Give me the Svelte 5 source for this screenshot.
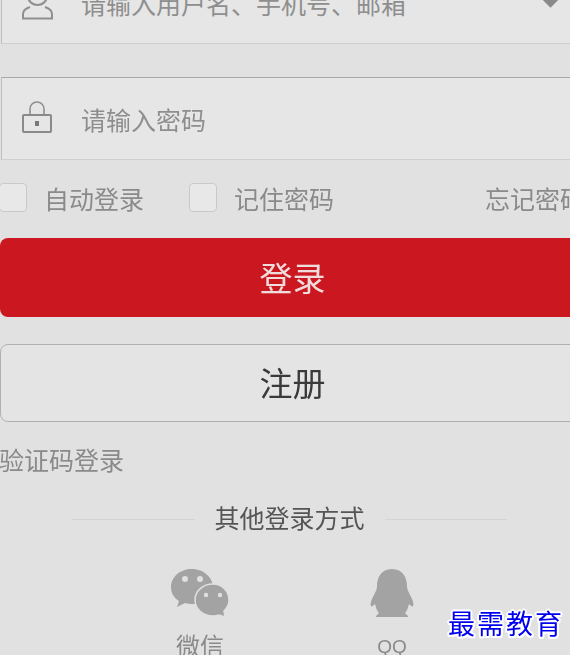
<script lang="ts">
  const options = [
    { label: '自动登录', width: 190 },
    { label: '记住密码', width: 0 }
  ];
</script>

<div class="page">
  <div class="form">
    <div class="field first">
      <svg class="icon user" viewBox="0 0 31 40" width="31" height="40">
        <circle cx="15.5" cy="14" r="10" fill="none" stroke="#8f8f8f" stroke-width="2" />
        <path d="M8 26c-3 1-7 3-7 7v4.5h29V33c0-4-4-6-7-7" fill="none" stroke="#8f8f8f" stroke-width="2" />
      </svg>
      <span class="placeholder">请输入用户名、手机号、邮箱</span>
      <span class="caret"></span>
    </div>

    <div class="field second">
      <svg class="icon lock" viewBox="0 0 30 32" width="30" height="32">
        <path d="M8 14V8a7 7 0 0 1 14 0v6" fill="none" stroke="#8f8f8f" stroke-width="1.6" />
        <rect x="1" y="14" width="28" height="17" rx="1" fill="none" stroke="#8a8a8a" stroke-width="2" />
        <rect x="13" y="20" width="4" height="5" fill="#777" />
      </svg>
      <span class="placeholder">请输入密码</span>
    </div>

    <div class="options">
      {#each options as opt}
        <label class="check" style:width={opt.width ? opt.width + 'px' : 'auto'}>
          <span class="box"></span>
          <span>{opt.label}</span>
        </label>
      {/each}
      <span class="forgot">忘记密码</span>
    </div>

    <button class="btn primary">登录</button>
    <button class="btn secondary">注册</button>

    <div class="sms">验证码登录</div>

    <div class="divider">
      <span class="line"></span>
      <span class="divider-text">其他登录方式</span>
      <span class="line"></span>
    </div>

    <div class="social">
      <div class="social-item">
        <svg viewBox="0 0 60 48" width="60" height="48">
          <path d="M22 0C10 0 1 8 1 18c0 6 3 11 8 14l-2 6 8-4c2 .6 5 1 8 1 10 0 20-8 20-17S34 0 22 0z" fill="#a3a3a3" />
          <circle cx="15" cy="10" r="3" fill="#e0e0e0" />
          <circle cx="30" cy="10" r="3" fill="#e0e0e0" />
          <path d="M43 15c-10 0-18 7-18 16s8 16 18 16c2 0 4-.3 6-1l6 2-1-6c3-3 5-7 5-11 0-9-7-16-16-16z" fill="#a3a3a3" stroke="#e0e0e0" stroke-width="1.5" />
          <circle cx="36" cy="26" r="2.2" fill="#e0e0e0" />
          <circle cx="50" cy="26" r="2.2" fill="#e0e0e0" />
        </svg>
        <span>微信</span>
      </div>
      <div class="social-item">
        <svg viewBox="0 0 44 48" width="44" height="48">
          <path d="M22 0C11 0 7 9 7 17c0 3-1 5-3 9-3 5-4 9-3 11 1 1 2 0 4-2 1 4 2 7 4 9l-3 3v1h32v-1l-3-3c2-2 3-5 4-9 2 2 3 3 4 2 1-2 0-6-3-11-2-4-3-6-3-9 0-8-4-17-15-17z" fill="#a3a3a3" />
        </svg>
        <span class="qq">QQ</span>
      </div>
    </div>
  </div>

  <div class="watermark">最需教育</div>
</div>

<style>
  :global(body) {
    margin: 0;
    background: #e1e1e1;
  }
  .page {
    position: relative;
    width: 570px;
    height: 655px;
    overflow: hidden;
    background: #e1e1e1;
    font-family: "Liberation Sans", "Noto Sans CJK SC", sans-serif;
  }
  .form {
    width: 585px;
    margin-top: -39px;
    filter: blur(0.7px);
  }
  .field {
    display: flex;
    align-items: center;
    box-sizing: border-box;
    height: 83px;
    margin-left: 1px;
    padding-left: 20px;
    background: #e6e6e6;
    border: 1px solid #bdbdbd;
    border-top-color: #a8a8a8;
    border-bottom-color: #cfcfcf;
    border-right: none;
  }
  .field.second {
    margin-top: 33px;
  }
  .icon {
    flex: none;
  }
  .icon.user {
    margin-top: -3px;
    margin-right: -1px;
  }
  .icon.lock {
    margin-top: -4px;
  }
  .placeholder {
    margin-left: 29px;
    font-size: 25px;
    color: #8e8e8e;
  }
  .caret {
    width: 13px;
    height: 13px;
    margin-left: auto;
    margin-right: 28px;
    margin-top: -9px;
    background: #8a8a8a;
    transform: rotate(45deg);
  }
  .options {
    display: flex;
    align-items: center;
    height: 29px;
    margin-top: 23px;
    font-size: 25px;
    color: #8a8a8a;
  }
  .check {
    display: flex;
    align-items: center;
    gap: 17px;
  }
  .box {
    box-sizing: border-box;
    width: 28px;
    height: 29px;
    margin-left: -1px;
    background: #e8e8e8;
    border: 1px solid #c9c9c9;
    border-radius: 4px;
  }
  .forgot {
    margin-left: auto;
  }
  .btn {
    display: block;
    box-sizing: border-box;
    width: 100%;
    font-family: inherit;
    font-size: 33px;
    padding: 0 0 2px;
  }
  .primary {
    height: 79px;
    margin-top: 26px;
    color: #f0dcdc;
    background: #cb1820;
    border: none;
    border-radius: 8px;
  }
  .secondary {
    height: 78px;
    margin-top: 27px;
    padding-bottom: 3px;
    color: #3a3a3a;
    background: #e4e4e4;
    border: 1px solid #b0b0b0;
    border-radius: 8px;
  }
  .sms {
    margin-top: 21px;
    margin-left: -1px;
    font-size: 25px;
    line-height: 36px;
    color: #8a8a8a;
  }
  .divider {
    display: flex;
    align-items: center;
    gap: 20px;
    width: 435px;
    margin: 22px 0 0 72px;
  }
  .line {
    flex: 1;
    height: 1px;
    background: #d4d4d4;
  }
  .divider-text {
    font-size: 25px;
    line-height: 36px;
    color: #555;
  }
  .social {
    display: grid;
    grid-template-columns: 192px 192px;
    margin: 32px 0 0 104px;
  }
  .social-item {
    display: flex;
    flex-direction: column;
    align-items: center;
    gap: 14px;
    font-size: 24px;
    line-height: 32px;
    color: #8a8a8a;
  }
  .qq {
    font-size: 19px;
  }
  .watermark {
    position: absolute;
    right: 6px;
    bottom: 16px;
    font-family: "Noto Sans CJK SC", sans-serif;
    font-size: 27px;
    line-height: 32px;
    letter-spacing: 2px;
    color: #0000ee;
    text-shadow: 2px 0 #fff, -2px 0 #fff, 0 2px #fff, 0 -2px #fff, 1.5px 1.5px #fff, -1.5px -1.5px #fff, 1.5px -1.5px #fff, -1.5px 1.5px #fff;
  }
</style>
